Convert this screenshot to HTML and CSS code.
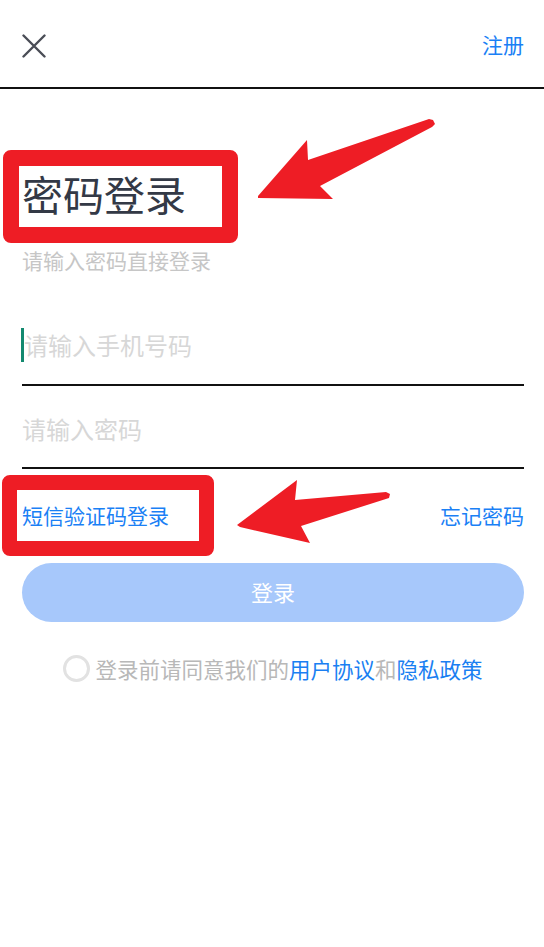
FILE: index.html
```html
<!DOCTYPE html>
<html lang="zh-CN">
<head>
<meta charset="utf-8">
<title>密码登录</title>
<link rel="stylesheet" href="styles.css">
</head>
<body>
<div class="page">
  <header class="topbar">
    <svg class="close" width="24" height="24" viewBox="0 0 24 24" aria-label="关闭">
      <path d="M1.5 1.5 L22.5 22.5 M22.5 1.5 L1.5 22.5" stroke="#4a4d56" stroke-width="2.4" stroke-linecap="round" fill="none"/>
    </svg>
    <a class="register">注册</a>
  </header>

  <main class="content">
    <h1 class="title">密码登录</h1>
    <p class="subtitle">请输入密码直接登录</p>

    <div class="field field-phone">
      <span class="caret"></span>
      <span class="placeholder">请输入手机号码</span>
    </div>
    <div class="field field-pass">
      <span class="placeholder">请输入密码</span>
    </div>

    <div class="links">
      <a class="link">短信验证码登录</a>
      <a class="link">忘记密码</a>
    </div>

    <button class="login-btn">登录</button>

    <div class="agree">
      <span class="radio"></span>
      <span class="agree-text">登录前请同意我们的<a class="blue">用户协议</a>和<a class="blue">隐私政策</a></span>
    </div>
  </main>

  <div class="mark mark-title"></div>
  <div class="mark mark-sms"></div>
  <svg class="arrows" width="544" height="947" viewBox="0 0 544 947">
    <polygon points="258,196 307,140 308,160 429,119 433,120 435,124 432,127 320,186 333,199 258,198" fill="#ee1d25"/>
    <polygon points="237,525 297,480 295,500 386,492 390,494 389,498 301,526 310,543 240,527" fill="#ee1d25"/>
  </svg>
</div>
</body>
</html>
```

FILE: styles.css
```css
* { box-sizing: border-box; }

html, body {
  margin: 0;
  padding: 0;
  background: #ffffff;
}

body {
  font-family: "Noto Sans CJK SC", "Noto Sans", sans-serif;
}

.page {
  position: relative;
  width: 544px;
  height: 947px;
  overflow: hidden;
}

.topbar {
  height: 89px;
  border-bottom: 2px solid #111111;
  display: flex;
  justify-content: space-between;
  align-items: flex-start;
  padding: 34px 20px 0 22px;
}

.close {
  display: block;
}

.register {
  font-size: 21px;
  line-height: 21px;
  color: #1a80f5;
}

.content {
  padding: 0 20px 0 22px;
}

.title {
  margin: 84px 0 0 0;
  font-size: 41px;
  line-height: 40px;
  font-weight: 400;
  color: #333946;
}

.subtitle {
  margin: 37px 0 0 0;
  font-size: 21px;
  line-height: 21px;
  color: #c6c6c6;
}

.field {
  display: flex;
  align-items: center;
  border-bottom: 2px solid #111111;
}

.field-phone {
  margin-top: 57px;
  padding-bottom: 22px;
}

.field-pass {
  padding-top: 26px;
  padding-bottom: 21px;
}

.caret {
  width: 3px;
  height: 34px;
  background: #13896f;
  margin-left: -1px;
}

.placeholder {
  font-size: 24px;
  line-height: 34px;
  color: #d7d7d7;
}

.links {
  margin-top: 36px;
  display: flex;
  justify-content: space-between;
}

.link {
  font-size: 21px;
  line-height: 21px;
  color: #1a80f5;
}

.login-btn {
  display: block;
  width: 100%;
  height: 59px;
  margin-top: 37px;
  border: none;
  border-radius: 30px;
  background: #a7c8fb;
  color: #ffffff;
  font-family: inherit;
  font-size: 22px;
  line-height: 22px;
  padding: 0 0 4px 0;
}

.agree {
  margin-top: 33px;
  display: flex;
  justify-content: center;
  align-items: center;
  gap: 5px;
}

.radio {
  width: 27px;
  height: 27px;
  border: 3px solid #e2e2e2;
  border-radius: 50%;
}

.agree-text {
  font-size: 21.5px;
  line-height: 26px;
  color: #b8b8b8;
}

.blue {
  color: #1a7ff2;
}

.mark {
  position: absolute;
  border: 16px solid #ee1d25;
  border-radius: 8px;
  pointer-events: none;
}

.mark-title {
  left: 3px;
  top: 150px;
  width: 235px;
  height: 93px;
}

.mark-sms {
  left: 2px;
  top: 475px;
  width: 212px;
  height: 81px;
  border-width: 15px;
}

.arrows {
  position: absolute;
  left: 0;
  top: 0;
  pointer-events: none;
}
```
